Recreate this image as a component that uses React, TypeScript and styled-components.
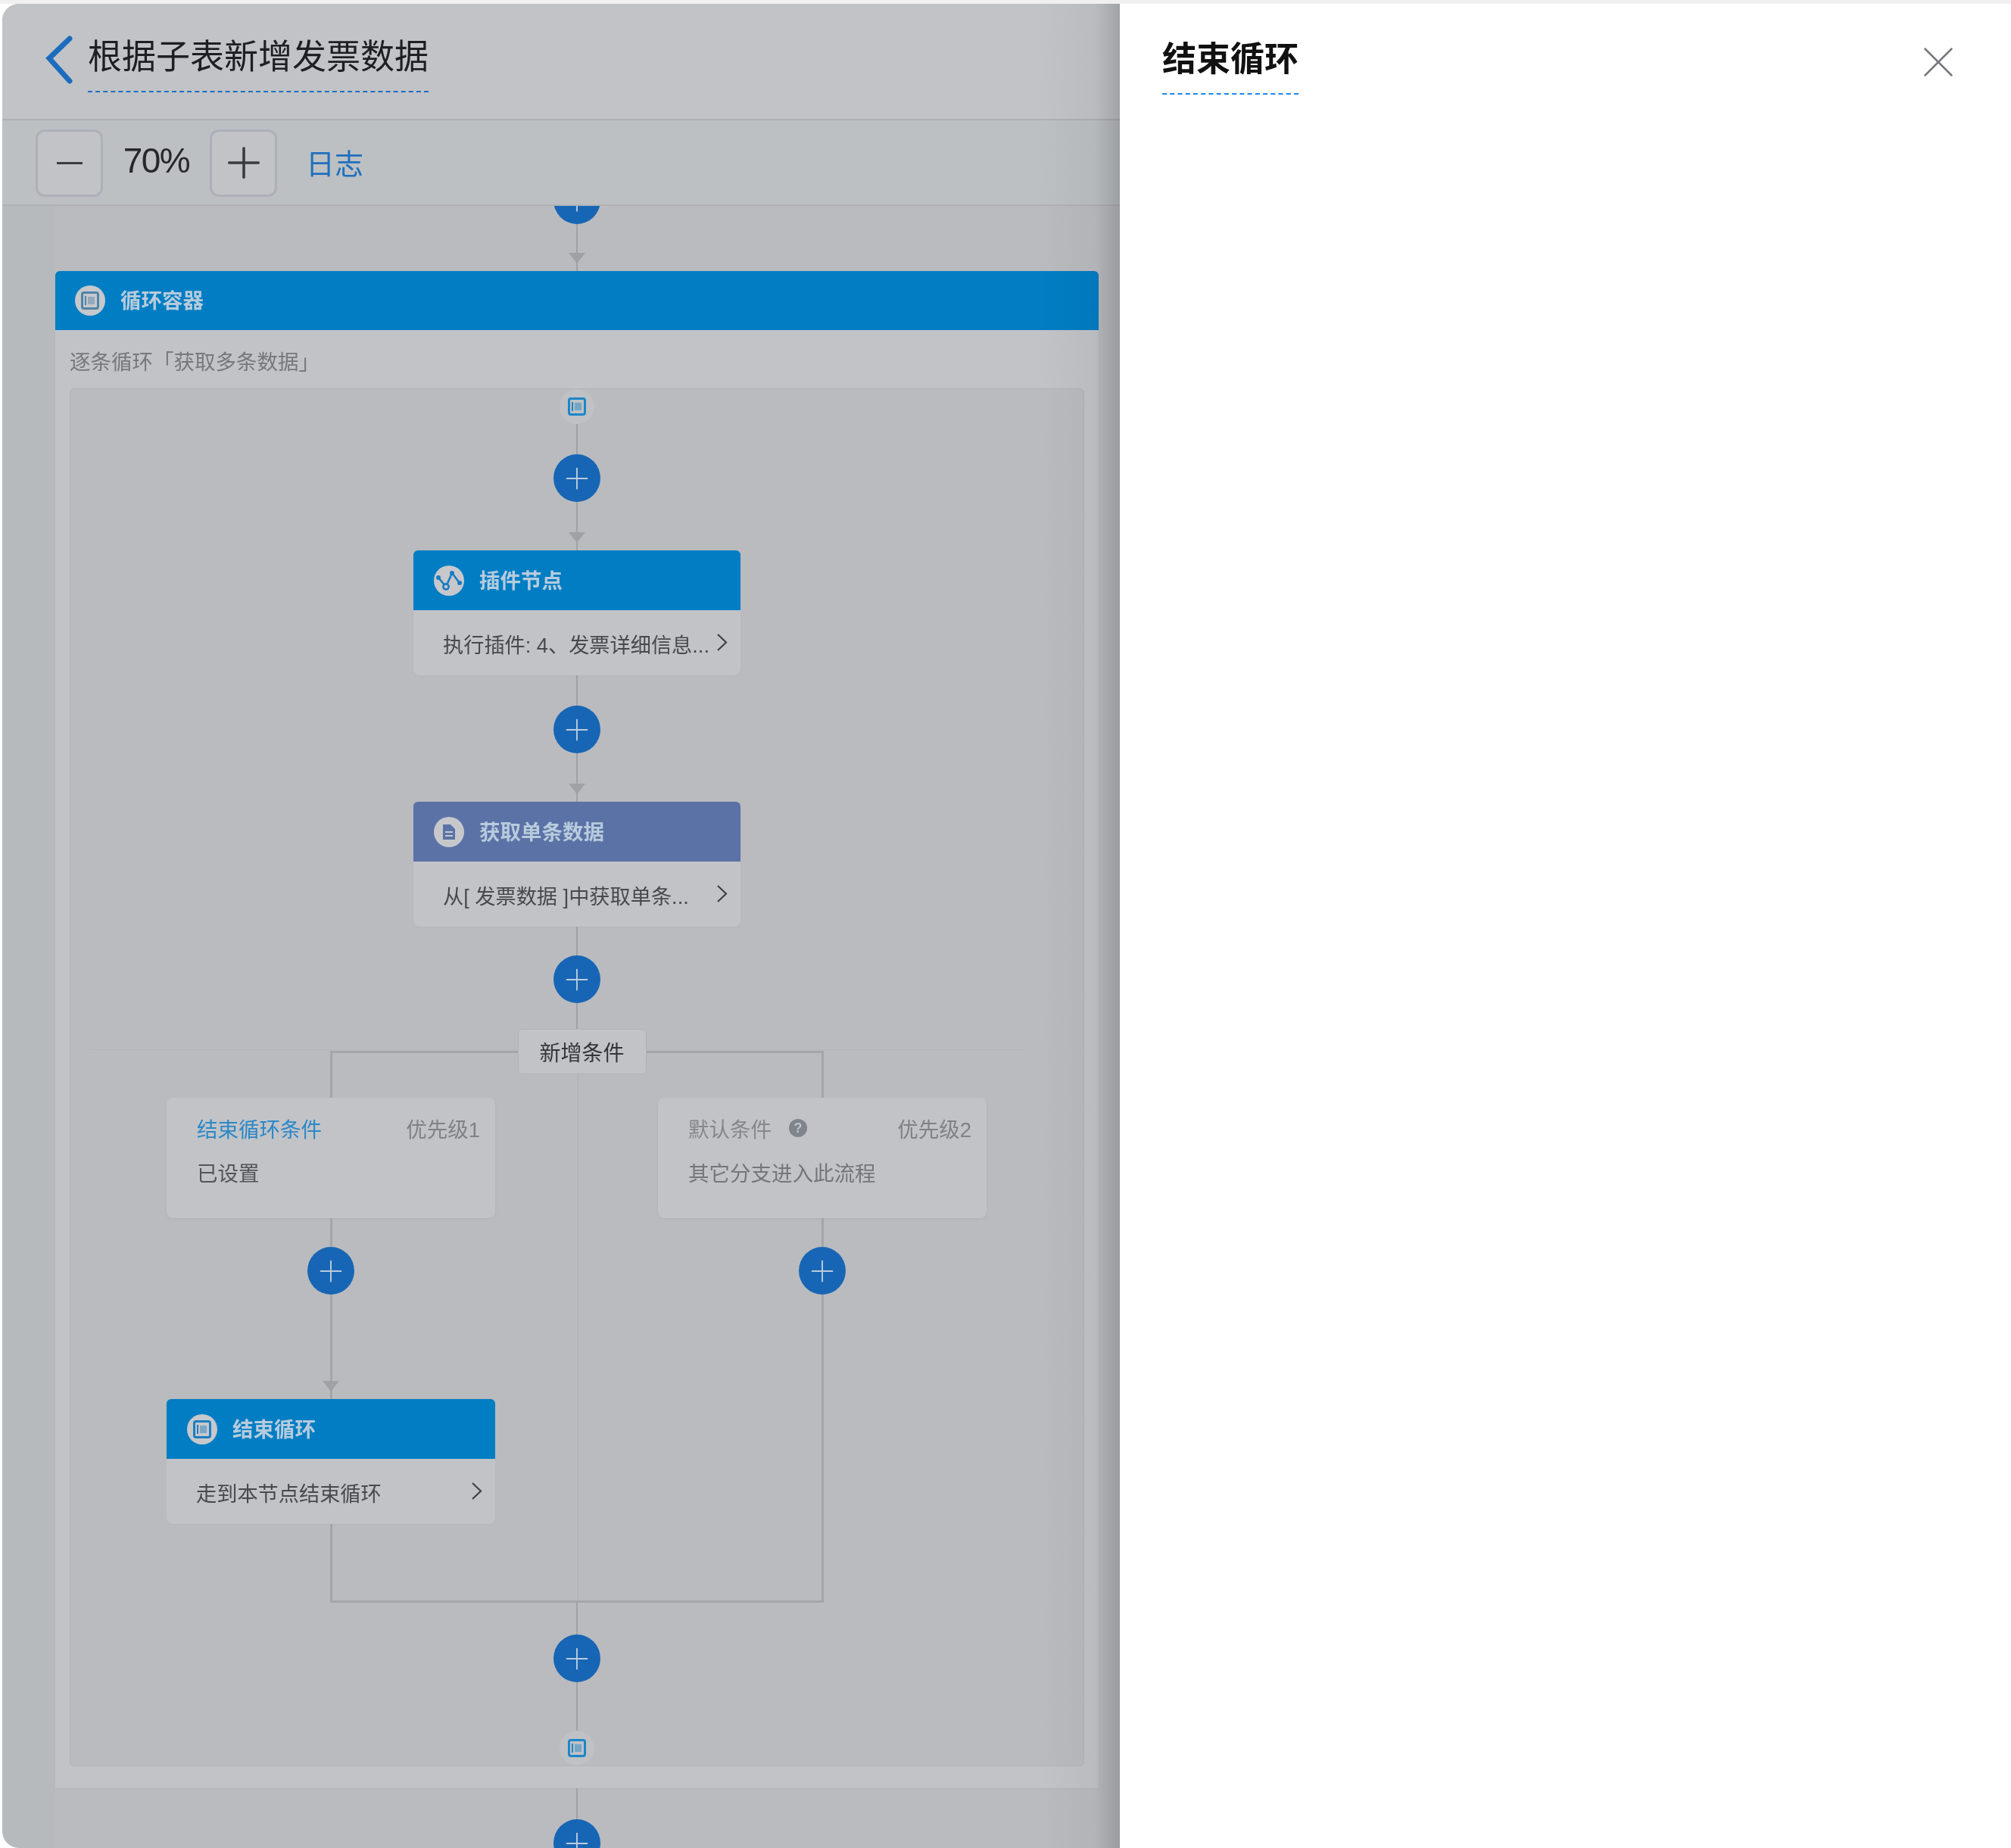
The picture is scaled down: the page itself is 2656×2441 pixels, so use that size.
import styled, { createGlobalStyle } from "styled-components";
import { Plus, X } from "lucide-react";

const GlobalStyle = createGlobalStyle`
  html, body {
    margin: 0;
    padding: 0;
    background: #fff;
  }
  * {
    box-sizing: border-box;
  }
`;

const FONT = `"Liberation Sans", "Noto Sans CJK SC", sans-serif`;

const Page = styled.div`
  width: 2656px;
  height: 2441px;
  display: flex;
  padding: 5px 0 0 3px;
  overflow: hidden;
  background: linear-gradient(#f0f0f0 0 5px, #fff 5px);
  font-family: ${FONT};
  filter: blur(0.6px);
`;

const LeftPane = styled.div`
  position: relative;
  width: 1476px;
  height: 100%;
  display: flex;
  flex-direction: column;
  border-radius: 22px 0 0 22px;
  overflow: hidden;
  background: #b6babd;

  &::after {
    content: "";
    position: absolute;
    top: 0;
    right: 0;
    bottom: 0;
    width: 110px;
    pointer-events: none;
    background: linear-gradient(to right, rgba(0, 0, 0, 0), rgba(0, 0, 0, 0.04) 70%, rgba(0, 0, 0, 0.17));
  }
`;

const Header = styled.header`
  height: 154px;
  flex: none;
  display: flex;
  align-items: flex-start;
  padding: 42px 0 0 55px;
  gap: 18px;
  background: #c1c3c7;
  border-bottom: 2px solid #aeb0b4;
`;

const BackIcon = styled.svg`
  width: 40px;
  height: 66px;
  flex: none;
`;

const PageTitle = styled.h1`
  margin: 0;
  height: 75px;
  font-size: 45px;
  line-height: 58px;
  font-weight: 400;
  color: #1e1f22;
  border-bottom: 2px dashed #1f6fbf;
`;

const Toolbar = styled.div`
  height: 113px;
  flex: none;
  display: flex;
  align-items: center;
  padding: 1px 0 0 44px;
  background: #bcc0c3;
  border-bottom: 2px solid #b0b2b6;
`;

const ZoomButton = styled.div`
  width: 89px;
  height: 89px;
  display: flex;
  align-items: center;
  justify-content: center;
  color: #3a3b3f;
  background: #c1c3c7;
  border: 3px solid #adb0b8;
  border-radius: 12px;
`;

const MinusBar = styled.span`
  width: 34px;
  height: 3px;
  background: #3c3d41;
`;

const ZoomValue = styled.span`
  width: 141px;
  padding-bottom: 6px;
  text-align: center;
  font-size: 46px;
  letter-spacing: -1.5px;
  color: #27282b;
`;

const LogLink = styled.span`
  margin-left: 38px;
  padding-bottom: 3px;
  font-size: 38px;
  color: #1f6fbf;
`;

const Canvas = styled.div`
  flex: 1;
  min-height: 0;
  padding-left: 70px;
  overflow: hidden;
`;

const Flow = styled.div`
  height: 100%;
  display: flex;
  flex-direction: column;
  background: #babbbf;
`;

const FlowInner = styled.div`
  width: 1378px;
  display: flex;
  flex-direction: column;
  align-items: center;
`;

const Line = styled.div<{ $h: number; $w?: number; $arrow?: boolean; $grow?: boolean }>`
  position: relative;
  flex: ${(p) => (p.$grow ? "1" : "none")};
  width: ${(p) => p.$w ?? 2}px;
  height: ${(p) => p.$h}px;
  background: ${(p) => (p.$w ? "#a3a5a9" : "#9fa1a5")};

  ${(p) =>
    p.$arrow &&
    `
    &::after {
      content: "";
      position: absolute;
      left: 50%;
      bottom: 10px;
      margin-left: -11px;
      border-left: 11px solid transparent;
      border-right: 11px solid transparent;
      border-top: 14px solid #9fa1a5;
    }
  `}
`;

const AddCircle = styled.div<{ $first?: boolean }>`
  width: 62px;
  height: 63px;
  flex: none;
  margin-top: ${(p) => (p.$first ? "-39px" : "0")};
  display: flex;
  align-items: center;
  justify-content: center;
  border-radius: 50%;
  background: #1766b5;
  color: #bccbdc;
`;

const LoopCard = styled.section`
  width: 100%;
  flex: none;
  border-radius: 6px 6px 0 0;
  background: #c1c3c7;
  box-shadow: 0 1px 2px #b2b3b7;
`;

const NodeHead = styled.div<{ $color?: string; $wide?: boolean }>`
  height: ${(p) => (p.$wide ? 78 : 79)}px;
  display: flex;
  align-items: center;
  gap: 20px;
  padding-left: ${(p) => (p.$wide ? 26 : 27)}px;
  border-radius: 6px 6px 0 0;
  background: ${(p) => p.$color ?? "#017dc4"};
`;

const HeadIcon = styled.span`
  width: 40px;
  height: 40px;
  flex: none;
  display: flex;
  align-items: center;
  justify-content: center;
  border-radius: 50%;
  background: #c6c8cc;
`;

const HeadTitle = styled.span`
  position: relative;
  top: -2px;
  font-size: 27.5px;
  font-weight: 700;
  color: #b6cbdc;
`;

const LoopDesc = styled.div`
  height: 77px;
  padding: 23px 0 0 19px;
  font-size: 27.5px;
  line-height: 40px;
  color: #76787c;
`;

const LoopInner = styled.div`
  margin: 0 19px 29px;
  height: 1820px;
  display: flex;
  flex-direction: column;
  align-items: center;
  border: 1px solid #b1b2b6;
  border-radius: 6px;
  background: #babbbf;
`;

const Halo = styled.div`
  width: 46px;
  height: 46px;
  flex: none;
  display: flex;
  align-items: center;
  justify-content: center;
  border-radius: 50%;
  background: #bfc1c5;
`;

const NodeCard = styled.article<{ $branch?: boolean }>`
  width: ${(p) => (p.$branch ? 434 : 432)}px;
  flex: none;
  border-radius: 8px;
  background: #c1c3c7;
  box-shadow: 0 1px 2px #b4b5b9;
`;

const NodeBody = styled.div`
  height: 86px;
  display: flex;
  align-items: center;
  justify-content: space-between;
  padding: 2px 17px 0 39px;
  font-size: 27.2px;
  color: #48494d;
  white-space: nowrap;
`;

const Chevron = styled.svg`
  width: 15px;
  height: 25px;
  flex: none;
  margin-top: -3px;
`;

const Branches = styled.div`
  position: relative;
  width: 1083px;
  height: 758px;
  flex: none;
  margin-left: -1px;
  display: flex;
  flex-direction: column;
  align-items: center;
`;

const FaintRule = styled.div`
  position: absolute;
  top: 27px;
  left: -102px;
  right: -50px;
  height: 1px;
  background: #b5b6ba;
`;

const CenterLine = styled.div`
  position: absolute;
  top: 60px;
  bottom: 0;
  left: 50%;
  width: 2px;
  background: #b3b5b8;
`;

const AddCondition = styled.div`
  position: relative;
  z-index: 1;
  width: 170px;
  height: 60px;
  flex: none;
  margin-left: 14px;
  display: flex;
  align-items: center;
  justify-content: center;
  font-size: 28px;
  color: #34353a;
  border-radius: 6px;
  border: 1px solid #b1b2b6;
  background: #c1c3c7;
`;

const BranchColumns = styled.div`
  position: relative;
  width: 100%;
  flex: 1;
  margin-top: -31px;
  display: flex;
  justify-content: space-between;

  &::before,
  &::after {
    content: "";
    position: absolute;
    left: 216px;
    right: 216px;
    height: 3px;
    background: #a3a5a9;
  }
  &::before {
    top: 0;
  }
  &::after {
    bottom: 0;
  }
`;

const BranchColumn = styled.div`
  width: 434px;
  display: flex;
  flex-direction: column;
  align-items: center;
`;

const ConditionCard = styled.article`
  width: 100%;
  height: 159px;
  flex: none;
  padding: 18px 20px 0 40px;
  border-radius: 8px;
  background: #c1c3c7;
  box-shadow: 0 1px 3px #b0b1b5;
`;

const ConditionRow = styled.div`
  display: flex;
  align-items: center;
  justify-content: space-between;
  height: 44px;
`;

const ConditionName = styled.span<{ $color: string }>`
  display: flex;
  align-items: center;
  gap: 23px;
  font-size: 27.5px;
  color: ${(p) => p.$color};
`;

const Priority = styled.span`
  font-size: 27.5px;
  color: #7f8185;
`;

const ConditionText = styled.div<{ $color: string }>`
  margin-top: 19px;
  font-size: 27.5px;
  line-height: 40px;
  color: ${(p) => p.$color};
`;

const HelpDot = styled.span`
  width: 24px;
  height: 24px;
  display: flex;
  align-items: center;
  justify-content: center;
  border-radius: 50%;
  font-size: 18px;
  font-weight: 700;
  color: #c1c3c7;
  background: #7f858b;
`;

const Drawer = styled.aside`
  position: relative;
  flex: 1;
  height: 100%;
  padding: 45px 0 0 56px;
  border-radius: 0 24px 0 0;
  background: #fff;
`;

const DrawerTitle = styled.h2`
  display: inline-block;
  margin: 0;
  height: 75px;
  font-size: 45px;
  line-height: 58px;
  font-weight: 700;
  color: #111;
  border-bottom: 2px dashed #1f86ea;
`;

const CloseButton = styled.span`
  position: absolute;
  top: 42px;
  right: 61px;
  display: flex;
  color: #75787c;
`;

function AddButton({ first }: { first?: boolean }) {
  return (
    <AddCircle $first={first}>
      <Plus size={46} strokeWidth={1} />
    </AddCircle>
  );
}

function FrameIcon({ size = 24, color = "#1c86c8" }: { size?: number; color?: string }) {
  return (
    <svg width={size} height={size} viewBox="0 0 24 24" fill="none">
      <rect x="1.5" y="1.5" width="21" height="21" rx="2.5" stroke={color} strokeWidth="3" />
      <rect x="9" y="7" width="9" height="10" fill={color} opacity="0.45" />
      <path d="M6 6 V18" stroke={color} strokeWidth="2" />
    </svg>
  );
}

function PluginIcon() {
  return (
    <svg width="40" height="40" viewBox="0 0 40 40" fill="none" stroke="#1a7cc0" strokeWidth="2.6">
      <path d="M6 16 L16 28 L24 10 L34 23" />
      <circle cx="16" cy="28" r="3.6" fill="#c6c8cc" />
      <circle cx="24" cy="10" r="3" fill="#1a7cc0" stroke="none" />
      <circle cx="6" cy="16" r="3" fill="#1a7cc0" stroke="none" />
      <circle cx="34" cy="23" r="3" fill="#1a7cc0" stroke="none" />
    </svg>
  );
}

function FileIcon() {
  return (
    <svg width="20" height="22" viewBox="0 0 20 22">
      <path
        d="M2 1 H12 L18 7 V21 H2 Z M5 10 V12 H15 V10 Z M5 15 V17 H15 V15 Z"
        fill="#5b72a6"
        fillRule="evenodd"
      />
    </svg>
  );
}

function RightChevron() {
  return (
    <Chevron viewBox="0 0 15 25" fill="none" stroke="#3f4044" strokeWidth="2.2">
      <polyline points="2,2 13,12.5 2,23" />
    </Chevron>
  );
}

export default function App() {
  return (
    <>
      <GlobalStyle />
      <Page>
        <LeftPane>
          <Header>
            <BackIcon viewBox="0 0 40 66" fill="none" stroke="#1b6cbd" strokeWidth="7" strokeLinecap="round">
              <polyline points="34,4 7,30 34,60" />
            </BackIcon>
            <PageTitle>根据子表新增发票数据</PageTitle>
          </Header>
          <Toolbar>
            <ZoomButton>
              <MinusBar />
            </ZoomButton>
            <ZoomValue>70%</ZoomValue>
            <ZoomButton>
              <Plus size={66} strokeWidth={1.3} />
            </ZoomButton>
            <LogLink>日志</LogLink>
          </Toolbar>
          <Canvas>
            <Flow>
              <FlowInner>
                <AddButton first />
                <Line $h={62} $arrow />
                <LoopCard>
                  <NodeHead $wide>
                    <HeadIcon>
                      <FrameIcon color="#4f83a8" />
                    </HeadIcon>
                    <HeadTitle>循环容器</HeadTitle>
                  </NodeHead>
                  <LoopDesc>逐条循环「获取多条数据」</LoopDesc>
                  <LoopInner>
                    <Halo>
                      <FrameIcon />
                    </Halo>
                    <Line $h={40} />
                    <AddButton />
                    <Line $h={64} $arrow />
                    <NodeCard>
                      <NodeHead>
                        <HeadIcon>
                          <PluginIcon />
                        </HeadIcon>
                        <HeadTitle>插件节点</HeadTitle>
                      </NodeHead>
                      <NodeBody>
                        <span>执行插件: 4、发票详细信息...</span>
                        <RightChevron />
                      </NodeBody>
                    </NodeCard>
                    <Line $h={40} />
                    <AddButton />
                    <Line $h={64} $arrow />
                    <NodeCard>
                      <NodeHead $color="#5b72a6">
                        <HeadIcon>
                          <FileIcon />
                        </HeadIcon>
                        <HeadTitle>获取单条数据</HeadTitle>
                      </NodeHead>
                      <NodeBody>
                        <span>从[ 发票数据 ]中获取单条...</span>
                        <RightChevron />
                      </NodeBody>
                    </NodeCard>
                    <Line $h={38} />
                    <AddButton />
                    <Line $h={34} />
                    <Branches>
                      <FaintRule />
                      <CenterLine />
                      <AddCondition>新增条件</AddCondition>
                      <BranchColumns>
                        <BranchColumn>
                          <Line $h={62} $w={3} />
                          <ConditionCard>
                            <ConditionRow>
                              <ConditionName $color="#2a88c8">结束循环条件</ConditionName>
                              <Priority>优先级1</Priority>
                            </ConditionRow>
                            <ConditionText $color="#54555a">已设置</ConditionText>
                          </ConditionCard>
                          <Line $h={38} $w={3} />
                          <AddButton />
                          <Line $h={138} $w={3} $arrow />
                          <NodeCard $branch>
                            <NodeHead>
                              <HeadIcon>
                                <FrameIcon color="#1c7fc0" />
                              </HeadIcon>
                              <HeadTitle>结束循环</HeadTitle>
                            </NodeHead>
                            <NodeBody>
                              <span>走到本节点结束循环</span>
                              <RightChevron />
                            </NodeBody>
                          </NodeCard>
                          <Line $h={0} $w={3} $grow />
                        </BranchColumn>
                        <BranchColumn>
                          <Line $h={62} $w={3} />
                          <ConditionCard>
                            <ConditionRow>
                              <ConditionName $color="#85878b">
                                默认条件
                                <HelpDot>?</HelpDot>
                              </ConditionName>
                              <Priority>优先级2</Priority>
                            </ConditionRow>
                            <ConditionText $color="#74767a">其它分支进入此流程</ConditionText>
                          </ConditionCard>
                          <Line $h={38} $w={3} />
                          <AddButton />
                          <Line $h={0} $w={3} $grow />
                        </BranchColumn>
                      </BranchColumns>
                    </Branches>
                    <Line $h={42} />
                    <AddButton />
                    <Line $h={64} />
                    <Halo>
                      <FrameIcon />
                    </Halo>
                  </LoopInner>
                </LoopCard>
                <Line $h={41} />
                <AddButton />
              </FlowInner>
            </Flow>
          </Canvas>
        </LeftPane>
        <Drawer>
          <DrawerTitle>结束循环</DrawerTitle>
          <CloseButton>
            <X size={70} strokeWidth={0.85} />
          </CloseButton>
        </Drawer>
      </Page>
    </>
  );
}
